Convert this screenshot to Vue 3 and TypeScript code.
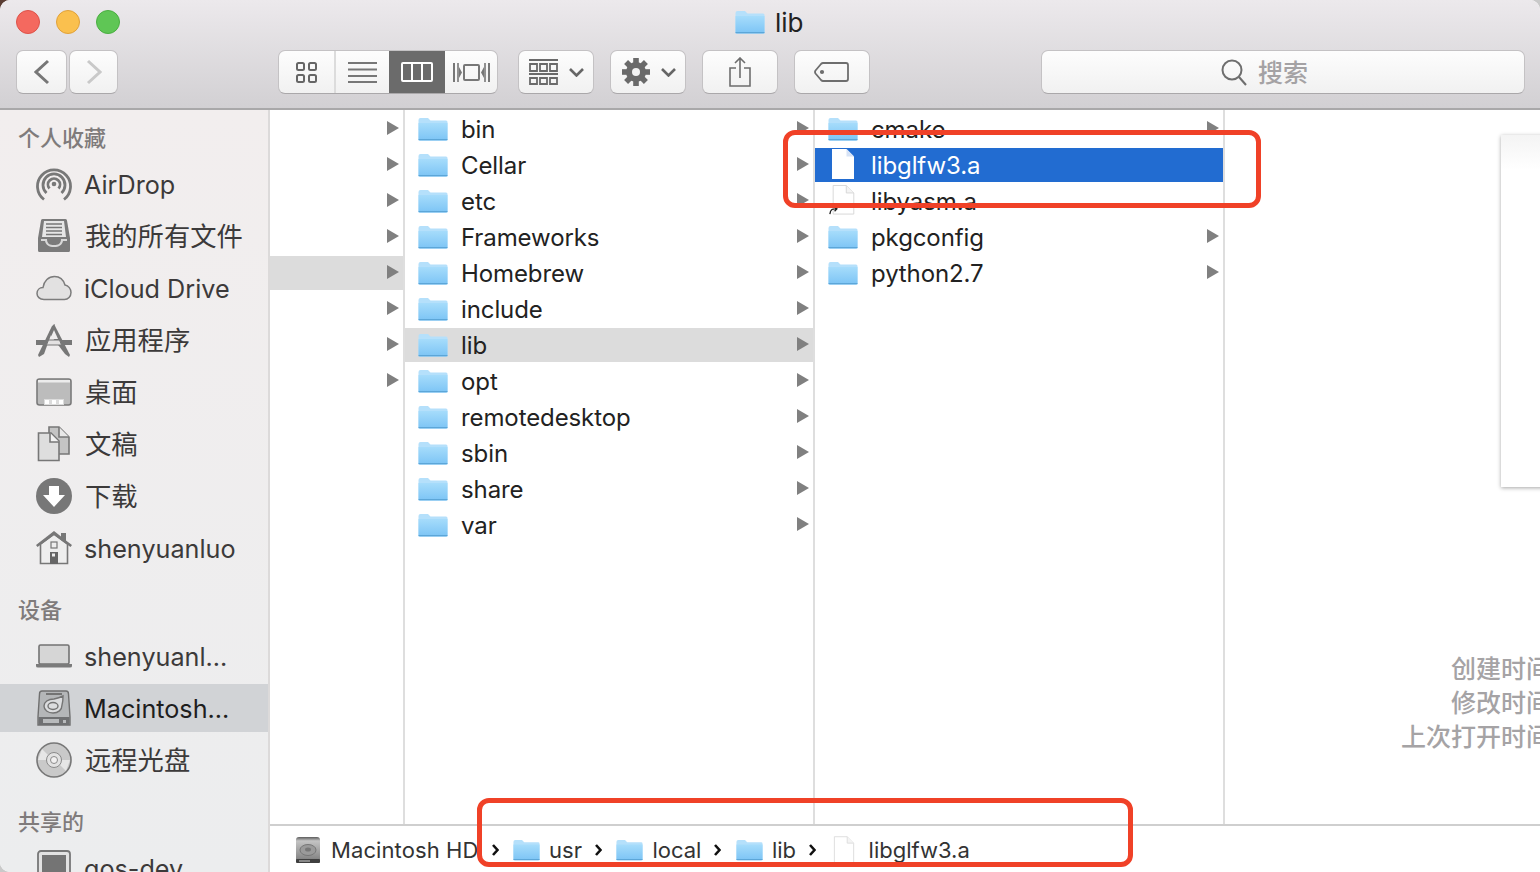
<script setup lang="ts">
interface Row { name: string; icon?: string; arrow?: boolean; state?: string }
const col1: Row[] = Array.from({ length: 8 }, (_, i) => ({ name: '', arrow: true, state: i === 4 ? 'active' : '' }))
const col2: Row[] = ['bin', 'Cellar', 'etc', 'Frameworks', 'Homebrew', 'include', 'lib', 'opt', 'remotedesktop', 'sbin', 'share', 'var']
  .map((name) => ({ name, icon: 'folder', arrow: true, state: name === 'lib' ? 'active' : '' }))
const col3: Row[] = [
  { name: 'cmake', icon: 'folder', arrow: true },
  { name: 'libglfw3.a', icon: 'file-white', state: 'selected' },
  { name: 'libyasm.a', icon: 'alias' },
  { name: 'pkgconfig', icon: 'folder', arrow: true },
  { name: 'python2.7', icon: 'folder', arrow: true },
]
const columns = [
  { cls: 'c1', rows: col1 },
  { cls: 'c2', rows: col2 },
  { cls: 'c3', rows: col3 },
]
const sections = [
  {
    title: '个人收藏',
    items: [
      { name: 'AirDrop', icon: 'airdrop' },
      { name: '我的所有文件', icon: 'allfiles' },
      { name: 'iCloud Drive', icon: 'icloud' },
      { name: '应用程序', icon: 'apps' },
      { name: '桌面', icon: 'desktop' },
      { name: '文稿', icon: 'docs' },
      { name: '下载', icon: 'download' },
      { name: 'shenyuanluo', icon: 'home' },
    ],
  },
  {
    title: '设备',
    items: [
      { name: 'shenyuanl...', icon: 'laptop' },
      { name: 'Macintosh...', icon: 'hd', active: true },
      { name: '远程光盘', icon: 'disc' },
    ],
  },
  { title: '共享的', items: [{ name: 'qos-dev', icon: 'server' }] },
]
const gearAngles = [0, 45, 90, 135, 180, 225, 270, 315]
const isCjk = (s: string): boolean => /[^\x00-\x7f]/.test(s)
</script>

<template>
  <div class="screen">
    <svg class="defs" aria-hidden="true">
      <defs>
        <linearGradient id="fg" x1="0" y1="0" x2="0" y2="1">
          <stop offset="0" stop-color="#a6dcfb" />
          <stop offset="1" stop-color="#7cc4f5" />
        </linearGradient>
        <linearGradient id="hdg" x1="0" y1="0" x2="0" y2="1">
          <stop offset="0" stop-color="#5c5c5c" />
          <stop offset="0.15" stop-color="#c4c4c4" />
          <stop offset="0.8" stop-color="#8a8a8a" />
          <stop offset="1" stop-color="#6f6f6f" />
        </linearGradient>
        <symbol id="folder" viewBox="0 0 30 24">
          <path d="M.5 3Q.5 1 2.500 1H10L12.500 3.500H28Q29.500 3.500 29.500 5V22Q29.500 23.500 28 23.500H2Q.5 23.500.5 22Z" fill="#b5e0fb" />
          <path d="M.5 6H29.500V22Q29.500 23.500 28 23.500H2Q.5 23.500.5 22Z" fill="url(#fg)" />
          <path d="M.5 22.600H29.500" stroke="#5ca6d8" stroke-width="1.200" />
        </symbol>
        <symbol id="file" viewBox="0 0 24 30">
          <path d="M1.500.5H15.500L22.500 7.500V29.500H1.500Z" fill="#fff" stroke="#dcdcdc" />
          <path d="M15.500.5V7.500H22.500" fill="#f4f4f4" stroke="#dcdcdc" />
        </symbol>
        <symbol id="file-white" viewBox="0 0 24 30">
          <path d="M1 0H15.500L23 7.500V30H1Z" fill="#fff" />
          <path d="M15.500 0V7.500H23" fill="#d7e3f6" />
        </symbol>
        <symbol id="alias" viewBox="0 0 30 32">
          <path d="M4.500.5H18.500L26.500 8.500V31H4.500Z" fill="#fff" stroke="#d6d6d6" />
          <path d="M18.500.5V8.500H26.500" fill="#f4f4f4" stroke="#d6d6d6" />
          <path d="M1 31C1.500 26 4 25 8 25.500M5 23L8.500 25.500L6 28" fill="none" stroke="#222" stroke-width="1.400" />
        </symbol>
        <symbol id="airdrop" viewBox="0 0 36 36">
          <g fill="none" stroke="#787878" stroke-width="2.800">
            <path d="M8 33.500A16.500 16.500 0 1 1 28 33.500" />
            <path d="M10.500 27A11 11 0 1 1 25.500 27" />
            <path d="M13.500 22.500A6 6 0 1 1 22.500 22.500" />
          </g>
          <circle cx="18" cy="18" r="2.300" fill="#787878" />
        </symbol>
        <symbol id="allfiles" viewBox="0 0 36 36">
          <path d="M5 2.500Q5 1 6.500 1H29.500Q31 1 31 2.500L34 20V32.500Q34 34 32.500 34H3.500Q2 34 2 32.500V20Z" fill="#7b7b7b" />
          <path d="M8 3H28L30 19H6Z" fill="#e6e6e6" />
          <path d="M10 6H26M10 9.500H26M10 13H26M10 16.500H26" stroke="#777" stroke-width="1.400" />
          <path d="M5 21H11C11 26 14 27 18 27S25 26 25 21H31V23H27C26 27 23 29 18 29S10 27 9 23H5Z" fill="#d8d8d8" />
        </symbol>
        <symbol id="icloud" viewBox="0 0 36 26">
          <path d="M8 24.500C3.500 24.500 1 21.500 1 18.500C1 15 3.500 12.500 7 12.500C8 6 12.500 1.500 18.500 1.500C24 1.500 27.500 5 29 10C32.500 10.500 35 14 35 17.500C35 21.500 32 24.500 28.500 24.500Z" fill="#e2e1e1" stroke="#7c7c7c" stroke-width="1.500" />
        </symbol>
        <symbol id="apps" viewBox="0 0 36 34">
          <path d="M13 10L18 1L34 32L33 34L29 31Z" fill="#777" />
          <path d="M16 3L19 1L8 31L3 34L2 32Z" fill="#777" />
          <path d="M0 17H11L9 22H0ZM25 17H36V22H27Z" fill="#777" />
          <path d="M12.500 17H23.500L25.500 22H10.500Z" fill="#e4e2e2" stroke="#777" stroke-width="1" />
          <path d="M18 7L22 16H14Z" fill="#efeded" />
        </symbol>
        <symbol id="desktop" viewBox="0 0 36 28">
          <rect x="1" y="1" width="34" height="26" rx="2.500" fill="#bcbcbc" stroke="#7a7a7a" stroke-width="1.600" />
          <path d="M2 2H34V4.500H2Z" fill="#ececec" />
          <rect x="8" y="21" width="20" height="6" fill="#dcdcdc" />
          <path d="M9 22H13V26H9ZM16 22H20V26H16ZM23 22H27V26H23Z" fill="#fff" />
        </symbol>
        <symbol id="docs" viewBox="0 0 34 36">
          <path d="M12 1H22L32 11V28H12Z" fill="#c4c4c4" stroke="#777" stroke-width="1.600" />
          <path d="M22 1V11H32" fill="#e8e8e8" stroke="#777" stroke-width="1.600" />
          <path d="M1.500 7H14L22 15V34.500H1.500Z" fill="#dedede" stroke="#777" stroke-width="1.600" />
          <path d="M13 7V16H22" fill="#f2f2f2" stroke="#777" stroke-width="1.600" />
        </symbol>
        <symbol id="download" viewBox="0 0 36 36">
          <circle cx="18" cy="18" r="18" fill="#777" />
          <path d="M13 8H23V17H29L18 29L7 17H13Z" fill="#fff" />
        </symbol>
        <symbol id="home" viewBox="0 0 36 34">
          <path d="M4.500 13V32.500H31.500V13L18 3Z" fill="#eeeeee" stroke="#777" stroke-width="1.600" />
          <path d="M0 14L18 0L25 5.500V2H30V9.500L36 14L34.500 16L18 4L1.500 16Z" fill="#777" />
          <rect x="15" y="11" width="6" height="6" fill="none" stroke="#777" stroke-width="1.200" />
          <rect x="14" y="21" width="8" height="12" fill="#666" />
          <rect x="16" y="22.500" width="3" height="3" fill="#eee" />
        </symbol>
        <symbol id="laptop" viewBox="0 0 36 24">
          <rect x="3" y="1" width="30" height="19" rx="1.500" fill="#d6d6d6" stroke="#737373" stroke-width="1.600" />
          <path d="M0 20H36V22Q36 23.500 34 23.500H2Q0 23.500 0 22Z" fill="#7b7b7b" />
        </symbol>
        <symbol id="hd" viewBox="0 0 34 36">
          <path d="M5 1H29Q31.500 1 31.500 4L33 27V35H1V27L2.500 4Q2.500 1 5 1Z" fill="#b4b6b8" stroke="#6f6f6f" stroke-width="1.400" />
          <path d="M1.500 27H32.500V33.500Q32.500 35 31 35H3Q1.500 35 1.500 33.500Z" fill="#6f7072" />
          <path d="M6 29H22V33H6ZM26 30H29V33H26Z" fill="#b8babc" />
          <path d="M9 4H25" stroke="#747474" stroke-width="2" />
          <path d="M17 9C22 8 24 7 26 6C26 9 26 12 25 15C25 20 21 23 16 23C11 23 7 20 7 16C7 12 11 9 17 9Z" fill="#dcdddf" stroke="#747474" stroke-width="1.400" />
          <ellipse cx="16" cy="16" rx="5" ry="3.500" fill="none" stroke="#747474" stroke-width="1.400" />
        </symbol>
        <symbol id="disc" viewBox="0 0 36 36">
          <circle cx="18" cy="18" r="17" fill="#c9c9c9" stroke="#777" stroke-width="1.600" />
          <path d="M6 7L14 15L11 18H2ZM30 29L22 21L25 18H34Z" fill="#e6e6e6" />
          <circle cx="18" cy="18" r="7.500" fill="#e2e2e2" stroke="#8a8a8a" />
          <circle cx="18" cy="18" r="3.500" fill="#f1f0f0" stroke="#8a8a8a" />
        </symbol>
        <symbol id="server" viewBox="0 0 36 36">
          <rect x="2" y="1" width="32" height="34" rx="3" fill="#e2e2e2" stroke="#777" stroke-width="1.800" />
          <rect x="6" y="5" width="24" height="26" fill="#747474" />
        </symbol>
        <symbol id="hdcolor" viewBox="0 0 24 26">
          <rect x="0" y="0" width="24" height="26" rx="3" fill="url(#hdg)" />
          <ellipse cx="12" cy="13" rx="8" ry="5.500" fill="#9a9a9a" stroke="#777" />
          <ellipse cx="12" cy="12.500" rx="3" ry="2" fill="#777" />
          <rect x="0" y="22" width="24" height="4" rx="1" fill="#3f3f3f" />
          <path d="M3 24H14" stroke="#bbb" stroke-width="1.200" />
        </symbol>
        <symbol id="crumb" viewBox="0 0 7 12">
          <path d="M1 1L5.500 6L1 11" fill="none" stroke="#111" stroke-width="2.600" />
        </symbol>
      </defs>
    </svg>

    <div class="window">
      <header class="toolbar">
        <div class="lights">
          <span class="light red"></span>
          <span class="light yellow"></span>
          <span class="light green"></span>
        </div>
        <div class="title">
          <svg class="title-icon"><use href="#folder" /></svg>
          <span>lib</span>
        </div>
        <div class="controls">
          <div class="nav">
            <button class="btn nav-btn">
              <svg width="16" height="26" viewBox="0 0 16 26"><path d="M14 2L2 13L14 24" fill="none" stroke="#777" stroke-width="3" /></svg>
            </button>
            <button class="btn nav-btn narrow">
              <svg width="16" height="26" viewBox="0 0 16 26"><path d="M2 2L14 13L2 24" fill="none" stroke="#c9c9c9" stroke-width="3" /></svg>
            </button>
          </div>
          <div class="views btn">
            <span class="seg s1">
              <svg width="21" height="21" viewBox="0 0 21 21" fill="none" stroke="#666" stroke-width="2">
                <rect x="1" y="1" width="7" height="7" rx="1.500" /><rect x="13" y="1" width="7" height="7" rx="1.500" />
                <rect x="1" y="13" width="7" height="7" rx="1.500" /><rect x="13" y="13" width="7" height="7" rx="1.500" />
              </svg>
            </span>
            <span class="seg s2">
              <svg width="29" height="21" viewBox="0 0 29 21" stroke="#777" stroke-width="2">
                <path d="M0 1H29M0 7.500H29M0 14H29M0 20H29" />
              </svg>
            </span>
            <span class="seg s3">
              <svg width="32" height="20" viewBox="0 0 32 20" fill="none" stroke="#fff" stroke-width="2">
                <rect x="1" y="1" width="30" height="18" rx="1" /><path d="M11 1V19M21 1V19" />
              </svg>
            </span>
            <span class="seg s4">
              <svg width="37" height="21" viewBox="0 0 37 21" fill="none" stroke="#777" stroke-width="2">
                <path d="M1 1V20M36 1V20" /><rect x="11" y="3" width="15" height="15" rx="1" />
                <path d="M5 1V20M32 1V20" stroke-width="1.600" />
                <path d="M6 5L9 10.500L6 16ZM31 5L28 10.500L31 16Z" fill="#777" stroke="none" />
              </svg>
            </span>
          </div>
          <button class="btn tool">
            <svg width="29" height="26" viewBox="0 0 29 26" fill="none" stroke="#6a6a6a" stroke-width="1.800">
              <path d="M0 1H29M0 15H29" /><path d="M1 5H8V12H1ZM11 5H18V12H11ZM21 5H28V12H21ZM1 19H8V25H1ZM11 19H18V25H11ZM21 19H28V25H21Z" />
            </svg>
            <svg class="chev" width="15" height="9" viewBox="0 0 15 9"><path d="M1 1L7.500 7.500L14 1" fill="none" stroke="#666" stroke-width="2.600" /></svg>
          </button>
          <button class="btn tool gear">
            <svg width="28" height="28" viewBox="-14 -14 28 28">
              <rect v-for="a in gearAngles" :key="a" x="-2.800" y="-14" width="5.600" height="7" fill="#6a6a6a" :transform="`rotate(${a})`" />
              <circle r="10" fill="#6a6a6a" /><circle r="4" fill="#f2f2f2" />
            </svg>
            <svg class="chev" width="15" height="9" viewBox="0 0 15 9"><path d="M1 1L7.500 7.500L14 1" fill="none" stroke="#666" stroke-width="2.600" /></svg>
          </button>
          <button class="btn tool single">
            <svg width="22" height="30" viewBox="0 0 22 30" fill="none" stroke="#6e6e6e" stroke-width="1.600">
              <path d="M7 11H1V29H21V11H15M11 21V1M6 6L11 1L16 6" />
            </svg>
          </button>
          <button class="btn tool single">
            <svg class="tag" width="35" height="20" viewBox="0 0 35 20" fill="none" stroke="#6e6e6e" stroke-width="1.800" stroke-linejoin="round">
              <path d="M9 1H32Q34 1 34 3V17Q34 19 32 19H9Q8 19 7 18L1.500 11.500Q.5 10 1.500 8.500L7 2Q8 1 9 1Z" /><circle cx="8" cy="10" r="1.200" fill="#6e6e6e" />
            </svg>
          </button>
          <div class="search btn">
            <svg width="26" height="27" viewBox="0 0 26 27" fill="none" stroke="#6e6e6e" stroke-width="2">
              <circle cx="11" cy="11" r="9.500" /><path d="M18 18L25 26" />
            </svg>
            <span class="search-text">搜索</span>
          </div>
        </div>
      </header>

      <div class="body">
        <aside class="sidebar">
          <section v-for="s in sections" :key="s.title" class="section">
            <div class="heading">{{ s.title }}</div>
            <div v-for="it in s.items" :key="it.name" class="item" :class="{ on: 'active' in it, cjk: isCjk(it.name) }">
              <svg class="item-icon"><use :href="'#' + it.icon" /></svg>
              <span>{{ it.name }}</span>
            </div>
          </section>
        </aside>

        <main class="main">
          <div class="browser">
            <div v-for="c in columns" :key="c.cls" class="column" :class="c.cls">
              <div v-for="(r, i) in c.rows" :key="i" class="row" :class="r.state">
                <svg v-if="r.icon" class="row-icon" :class="{ small: r.icon !== 'folder' }"><use :href="'#' + r.icon" /></svg>
                <span class="row-name">{{ r.name }}</span>
                <svg v-if="r.arrow" class="arrow" width="12" height="14" viewBox="0 0 12 14"><path d="M0 0L12 7L0 14Z" fill="#808080" /></svg>
              </div>
            </div>
            <div class="preview">
              <div class="paper"></div>
              <dl class="meta">
                <dd>创建时间</dd>
                <dd>修改时间</dd>
                <dd>上次打开时间</dd>
              </dl>
            </div>
          </div>
          <footer class="pathbar">
            <svg class="p-hd"><use href="#hdcolor" /></svg>
            <span class="p-text first">Macintosh HD</span>
            <svg class="sep"><use href="#crumb" /></svg>
            <svg class="p-folder"><use href="#folder" /></svg>
            <span class="p-text">usr</span>
            <svg class="sep"><use href="#crumb" /></svg>
            <svg class="p-folder"><use href="#folder" /></svg>
            <span class="p-text">local</span>
            <svg class="sep"><use href="#crumb" /></svg>
            <svg class="p-folder"><use href="#folder" /></svg>
            <span class="p-text">lib</span>
            <svg class="sep"><use href="#crumb" /></svg>
            <svg class="p-file"><use href="#file" /></svg>
            <span class="p-text last">libglfw3.a</span>
          </footer>
        </main>
      </div>
    </div>

    <div class="mark mark-top"></div>
    <div class="mark mark-bottom"></div>
  </div>
</template>

<style scoped>
.screen {
  position: relative;
  width: 1540px;
  height: 872px;
  overflow: hidden;
  background: linear-gradient(#5a3d33, #5a3d33) 0 0 / 12px 12px no-repeat, #c9c9c9;
  font-family: Inter, "Noto Sans CJK SC", sans-serif;
}
.defs { position: absolute; width: 0; height: 0; }
.window {
  height: 100%;
  display: flex;
  flex-direction: column;
  border-radius: 10px 10px 0 10px;
  overflow: hidden;
  background: #fff;
}
.toolbar {
  position: relative;
  flex: none;
  box-sizing: border-box;
  height: 110px;
  padding: 50px 15px 0 16px;
  background: linear-gradient(#ece9ec, #d2d0d3);
  border-bottom: 2px solid #a9a8a9;
}
.lights { position: absolute; left: 16px; top: 10px; display: flex; gap: 16px; }
.light { width: 24px; height: 24px; border-radius: 50%; box-sizing: border-box; border: 1px solid; }
.red { background: #f4695f; border-color: #dd5249; }
.yellow { background: #fac04e; border-color: #e0a13a; }
.green { background: #5fc655; border-color: #4aae41; }
.title {
  position: absolute;
  left: 735px;
  top: 0;
  height: 44px;
  display: flex;
  align-items: center;
  gap: 10px;
  font-size: 26px;
  color: #222;
}
.title-icon { width: 30px; height: 24px; }
.controls { display: flex; align-items: stretch; height: 44px; }
.btn {
  box-sizing: border-box;
  border: 1px solid #c4c2c4;
  border-bottom-color: #aaa8aa;
  border-radius: 7px;
  background: linear-gradient(#fdfdfd, #f1f1f1);
  padding: 0;
}
.nav { display: flex; gap: 2px; margin-right: 160px; }
.nav-btn { width: 51px; display: flex; align-items: center; justify-content: center; }
.nav-btn.narrow { width: 49px; }
.views { display: flex; width: 220px; overflow: hidden; margin-right: 20px; }
.seg { display: flex; align-items: center; justify-content: center; box-sizing: border-box; }
.s1 { width: 57px; border-right: 2px solid #dcdcdc; }
.s2 { width: 53px; }
.s3 { width: 56px; background: #6b6b6b; }
.s4 { flex: 1; }
.tool {
  width: 76px;
  margin-right: 16px;
  display: flex;
  align-items: center;
  justify-content: center;
  gap: 11px;
}
.gear { padding-left: 2px; }
.tag { margin-left: -2px; }
.search {
  width: 484px;
  margin-left: 155px;
  display: flex;
  align-items: center;
  justify-content: center;
  gap: 11px;
  padding-right: 37px;
  color: #a4a2a4;
  font-size: 25px;
  font-weight: 500;
}
.search-text { padding-bottom: 2px; }
.chev { flex: none; }

.body { flex: 1; min-height: 0; display: flex; }
.sidebar {
  flex: none;
  box-sizing: border-box;
  width: 270px;
  padding-top: 4px;
  overflow: hidden;
  background: linear-gradient(#f2eeee, #ecedee);
  border-right: 2px solid #dcdada;
}
.section + .section { margin-top: 14px; }
.heading {
  box-sizing: border-box;
  height: 46px;
  display: flex;
  align-items: center;
  padding: 0 0 3px 18px;
  font-size: 22px;
  font-weight: 500;
  color: #7f7b7b;
}
.item {
  height: 48px;
  margin-bottom: 4px;
  display: flex;
  align-items: center;
  padding-left: 36px;
  gap: 12px;
  font-size: 25.2px;
  color: #3c3a3a;
  white-space: nowrap;
}
.item span { padding-top: 2px; }
.item.cjk { font-size: 26.3px; gap: 13px; }
.item.cjk span { padding: 0 0 3px; }
.item.on { background: #d1d3d6; color: #1e1e1e; }
.item-icon { width: 36px; height: 36px; flex: none; }

.main { flex: 1; min-width: 0; display: flex; flex-direction: column; }
.browser { flex: 1; min-height: 0; display: flex; }
.column {
  flex: none;
  box-sizing: border-box;
  padding-top: 2px;
  border-right: 2px solid #dedede;
  font-size: 24px;
  letter-spacing: -0.1px;
  color: #222;
}
.c1 { width: 135px; }
.c2 { width: 410px; }
.c3 { width: 410px; }
.row {
  position: relative;
  box-sizing: border-box;
  height: 34px;
  margin-bottom: 2px;
  display: flex;
  align-items: center;
  padding-left: 13px;
  gap: 13px;
  white-space: nowrap;
}
.c1 .row { padding-left: 0; }
.row.active { background: #dcdcdc; }
.row.selected { background: #226cd1; color: #fff; }
.row-icon { width: 30px; height: 24px; flex: none; }
.row-icon.small { height: 30px; margin-bottom: 3px; }
.row-name { flex: 1; }
.arrow { position: absolute; right: 4px; top: 9px; }
.preview { position: relative; flex: 1; min-width: 0; overflow: hidden; }
.paper {
  box-sizing: border-box;
  width: 60px;
  height: 352px;
  margin: 25px 0 0 276px;
  background: linear-gradient(#f4f4f4, #fff 10%);
  box-shadow: 0 1px 4px rgba(0, 0, 0, 0.35);
}
.meta {
  margin: 165px -11px 0 0;
  text-align: right;
  font-size: 25px;
  font-weight: 500;
  line-height: 34px;
  color: #a5a3a5;
}
.meta dd { margin: 0; white-space: nowrap; }
.pathbar {
  flex: none;
  box-sizing: border-box;
  height: 48px;
  padding: 2px 0 0 26px;
  border-top: 2px solid #cfcfcf;
  display: flex;
  align-items: center;
  font-size: 22px;
  color: #333;
  white-space: nowrap;
}
.first { letter-spacing: 0.1px; }
.p-hd { width: 24px; height: 26px; margin-right: 11px; }
.p-folder { width: 27px; height: 22px; margin-right: 9px; }
.p-file { width: 22px; height: 28px; margin: 0 14px 0 2px; }
.sep { width: 7px; height: 12px; margin: 0 14.5px 0 13px; flex: none; }
.mark {
  position: absolute;
  box-sizing: border-box;
  border: 5px solid #f04127;
  border-radius: 12px;
  pointer-events: none;
}
.mark-top { left: 783px; top: 130px; width: 478px; height: 78px; }
.mark-bottom { left: 477px; top: 798px; width: 656px; height: 69px; }
</style>
